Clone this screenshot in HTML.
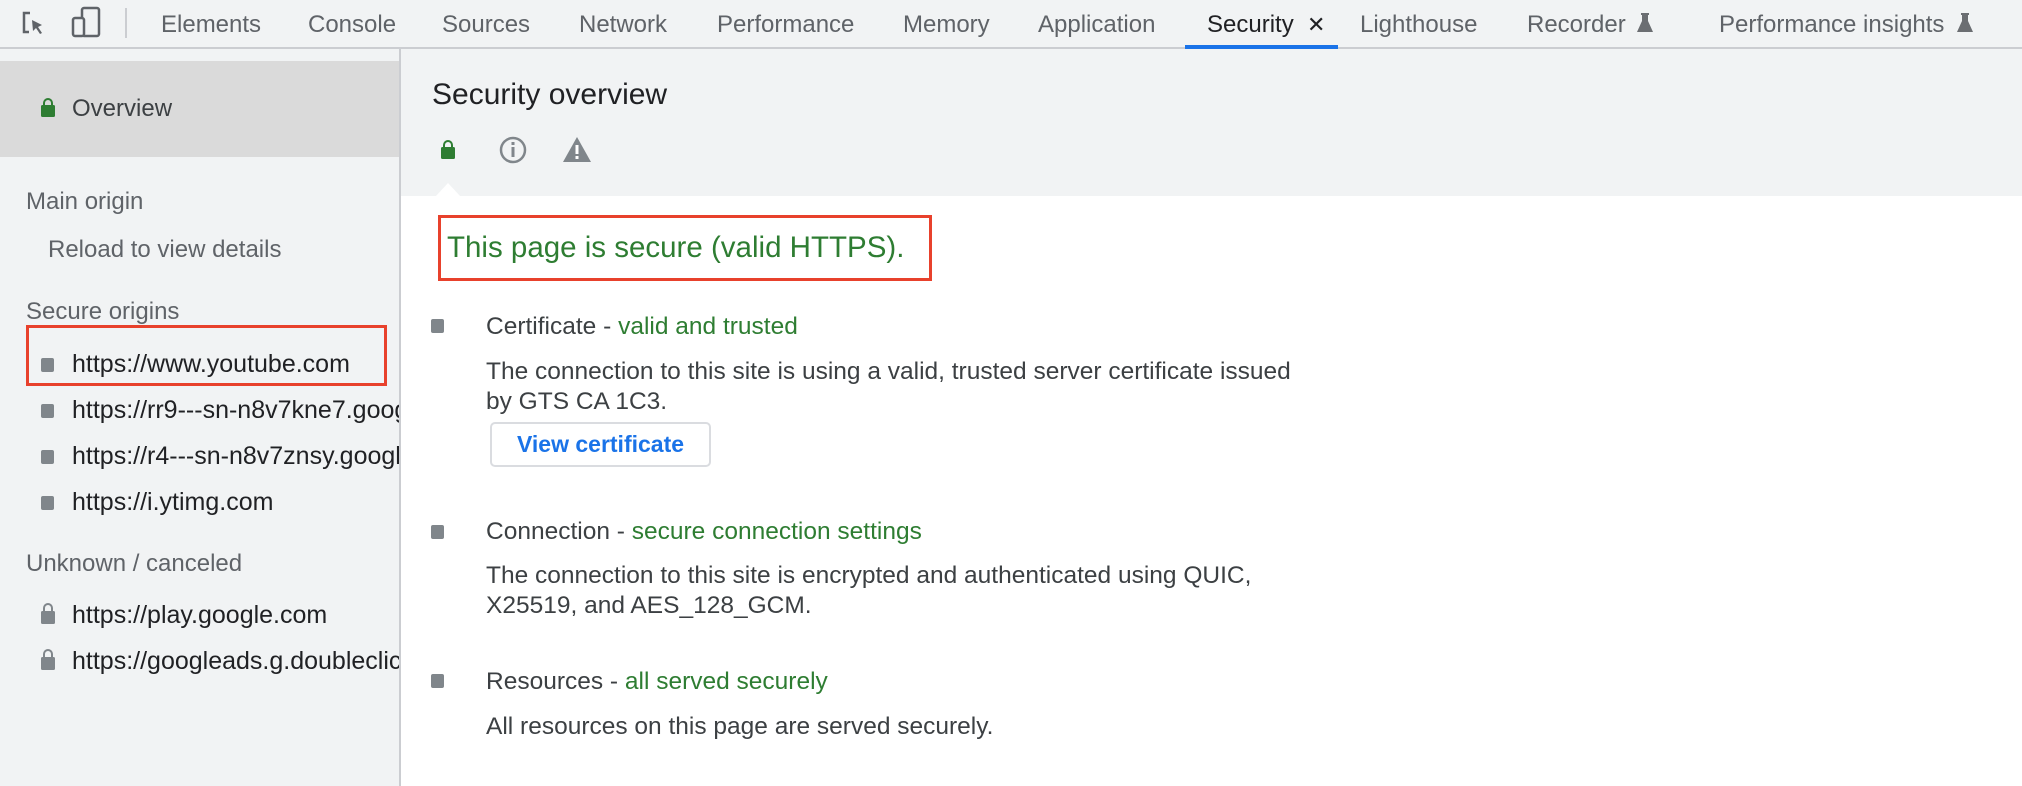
<!DOCTYPE html>
<html><head><meta charset="utf-8"><style>
*{margin:0;padding:0;box-sizing:border-box}
body{width:2022px;height:786px;overflow:hidden;background:#fff;font-family:"Liberation Sans",Arial,sans-serif;position:relative;color:#3c4043}
.a{position:absolute;white-space:nowrap}
#tb{position:absolute;left:0;top:0;width:2022px;height:49px;background:#f1f3f4;border-bottom:2px solid #cbcdd1}
.tab{position:absolute;top:11px;font-size:24px;color:#5f6368}
#side{position:absolute;left:0;top:49px;width:401px;height:737px;background:#f1f3f4;border-right:2px solid #cbcdd1;overflow:hidden}
#hdr{position:absolute;left:401px;top:49px;width:1621px;height:147px;background:#f1f3f4}
.sq{position:absolute;width:13px;height:14px;background:#80868b;border-radius:2px}
.s{font-size:25px;color:#202124}
.g{color:#2e7d32}
.t{font-size:24.5px;color:#3c4043}
</style></head><body>
<div id="tb">
 <svg class="a" style="left:20px;top:10px" width="28" height="30" viewBox="0 0 28 30"><path d="M10 3H4v19h5" fill="none" stroke="#5f6368" stroke-width="2.5"/><path d="M12 10l10 5-4 2 4 6-2 1-4-6-3 3z" fill="#5f6368"/></svg>
 <svg class="a" style="left:70px;top:6px" width="34" height="32" viewBox="0 0 34 32"><rect x="12" y="2" width="17" height="28" rx="2" fill="none" stroke="#5f6368" stroke-width="2.5"/><rect x="3" y="12" width="11" height="18" rx="2" fill="#f1f3f4" stroke="#5f6368" stroke-width="2.5"/></svg>
 <div class="a" style="left:125px;top:8px;width:2px;height:30px;background:#cbcdd1"></div>
 <span class="a tab" style="left:161px">Elements</span>
 <span class="a tab" style="left:308px">Console</span>
 <span class="a tab" style="left:442px">Sources</span>
 <span class="a tab" style="left:579px">Network</span>
 <span class="a tab" style="left:717px">Performance</span>
 <span class="a tab" style="left:903px">Memory</span>
 <span class="a tab" style="left:1038px">Application</span>
 <span class="a tab" style="left:1207px;color:#202124">Security</span>
 <span class="a tab" style="left:1307px;color:#202124;font-size:22px;top:12px">✕</span>
 <span class="a tab" style="left:1360px">Lighthouse</span>
 <span class="a tab" style="left:1527px">Recorder</span>
 <svg class="a" style="left:1636px;top:12px" width="18" height="22" viewBox="0 0 18 22"><path d="M5 1h8v2h-1v6l5 11H1l5-11V3H5z" fill="#6b6e72"/></svg>
 <span class="a tab" style="left:1719px">Performance insights</span>
 <svg class="a" style="left:1956px;top:12px" width="18" height="22" viewBox="0 0 18 22"><path d="M5 1h8v2h-1v6l5 11H1l5-11V3H5z" fill="#6b6e72"/></svg>
 <div class="a" style="left:1185px;top:45px;width:153px;height:4px;background:#1a73e8"></div>
</div>
<div id="side">
 <div class="a" style="left:0;top:12px;width:399px;height:96px;background:#dadada"></div>
 <svg class="a" style="left:40px;top:48px" width="16" height="20" viewBox="0 0 16 20"><path d="M4 9V6a4 4 0 0 1 8 0v3" fill="none" stroke="#2e7d32" stroke-width="2"/><rect x="1" y="8" width="14" height="12" rx="1.5" fill="#2e7d32"/></svg>
 <span class="a" style="left:72px;top:46px;font-size:24px;color:#3c4043">Overview</span>
 <span class="a" style="left:26px;top:139px;font-size:24px;color:#5f6368">Main origin</span>
 <span class="a" style="left:48px;top:187px;font-size:24px;color:#5f6368">Reload to view details</span>
 <span class="a" style="left:26px;top:249px;font-size:24px;color:#5f6368">Secure origins</span>
 <div class="a" style="left:26px;top:276px;width:361px;height:61px;border:3px solid #e8412c"></div>
 <div class="sq" style="left:41px;top:309px"></div><span class="a s" style="left:72px;top:301px">https://www.youtube.com</span>
 <div class="sq" style="left:41px;top:355px"></div><span class="a s" style="left:72px;top:347px">https://rr9---sn-n8v7kne7.googlevideo.com</span>
 <div class="sq" style="left:41px;top:401px"></div><span class="a s" style="left:72px;top:393px">https://r4---sn-n8v7znsy.googlevideo.com</span>
 <div class="sq" style="left:41px;top:447px"></div><span class="a s" style="left:72px;top:439px">https://i.ytimg.com</span>
 <span class="a" style="left:26px;top:501px;font-size:24px;color:#5f6368">Unknown / canceled</span>
 <svg class="a" style="left:40px;top:553px" width="16" height="22" viewBox="0 0 16 22"><path d="M4 10V6a4 4 0 0 1 8 0v4" fill="none" stroke="#80868b" stroke-width="2"/><rect x="1" y="9" width="14" height="13" rx="1.5" fill="#80868b"/></svg>
 <span class="a s" style="left:72px;top:552px">https://play.google.com</span>
 <svg class="a" style="left:40px;top:599px" width="16" height="22" viewBox="0 0 16 22"><path d="M4 10V6a4 4 0 0 1 8 0v4" fill="none" stroke="#80868b" stroke-width="2"/><rect x="1" y="9" width="14" height="13" rx="1.5" fill="#80868b"/></svg>
 <span class="a s" style="left:72px;top:598px">https://googleads.g.doubleclick.net</span>
</div>
<div id="hdr">
 <span class="a" style="left:31px;top:29px;font-size:30px;color:#202124">Security overview</span>
 <svg class="a" style="left:39px;top:90px" width="16" height="20" viewBox="0 0 16 20"><path d="M4 9V6a4 4 0 0 1 8 0v3" fill="none" stroke="#2e7d32" stroke-width="2"/><rect x="1" y="8" width="14" height="12" rx="1.5" fill="#2e7d32"/></svg>
 <svg class="a" style="left:97px;top:86px" width="30" height="30" viewBox="0 0 30 30"><circle cx="15" cy="15" r="12" fill="none" stroke="#80868b" stroke-width="2.5"/><rect x="13.5" y="12" width="3" height="10" fill="#80868b"/><rect x="13.5" y="7" width="3" height="3" fill="#80868b"/></svg>
 <svg class="a" style="left:161px;top:86px" width="30" height="28" viewBox="0 0 30 28"><path d="M15 2L29 27H1z" fill="#80868b"/><rect x="13.5" y="10" width="3" height="9" fill="#fff"/><rect x="13.5" y="21" width="3" height="3" fill="#fff"/></svg>
 <svg class="a" style="left:34px;top:134px" width="26" height="14" viewBox="0 0 26 14"><path d="M0 14L13 0L26 14z" fill="#fff"/></svg>
</div>
<div class="a" style="left:438px;top:215px;width:494px;height:66px;border:3px solid #e8412c"></div>
<span class="a g" style="left:447px;top:231px;font-size:29.5px">This page is secure (valid HTTPS).</span>
<div class="sq" style="left:431px;top:319px"></div>
<span class="a t" style="left:486px;top:313px">Certificate - <span class="g">valid and trusted</span></span>
<span class="a t" style="left:486px;top:358px">The connection to this site is using a valid, trusted server certificate issued</span>
<span class="a t" style="left:486px;top:388px">by GTS CA 1C3.</span>
<div class="a" style="left:490px;top:422px;width:221px;height:45px;border:2px solid #dadce0;border-radius:5px;color:#1a73e8;font-size:23px;font-weight:bold;text-align:center;line-height:41px">View certificate</div>
<div class="sq" style="left:431px;top:525px"></div>
<span class="a t" style="left:486px;top:518px">Connection - <span class="g">secure connection settings</span></span>
<span class="a t" style="left:486px;top:562px">The connection to this site is encrypted and authenticated using QUIC,</span>
<span class="a t" style="left:486px;top:592px">X25519, and AES_128_GCM.</span>
<div class="sq" style="left:431px;top:674px"></div>
<span class="a t" style="left:486px;top:668px">Resources - <span class="g">all served securely</span></span>
<span class="a t" style="left:486px;top:713px">All resources on this page are served securely.</span>
</body></html>
